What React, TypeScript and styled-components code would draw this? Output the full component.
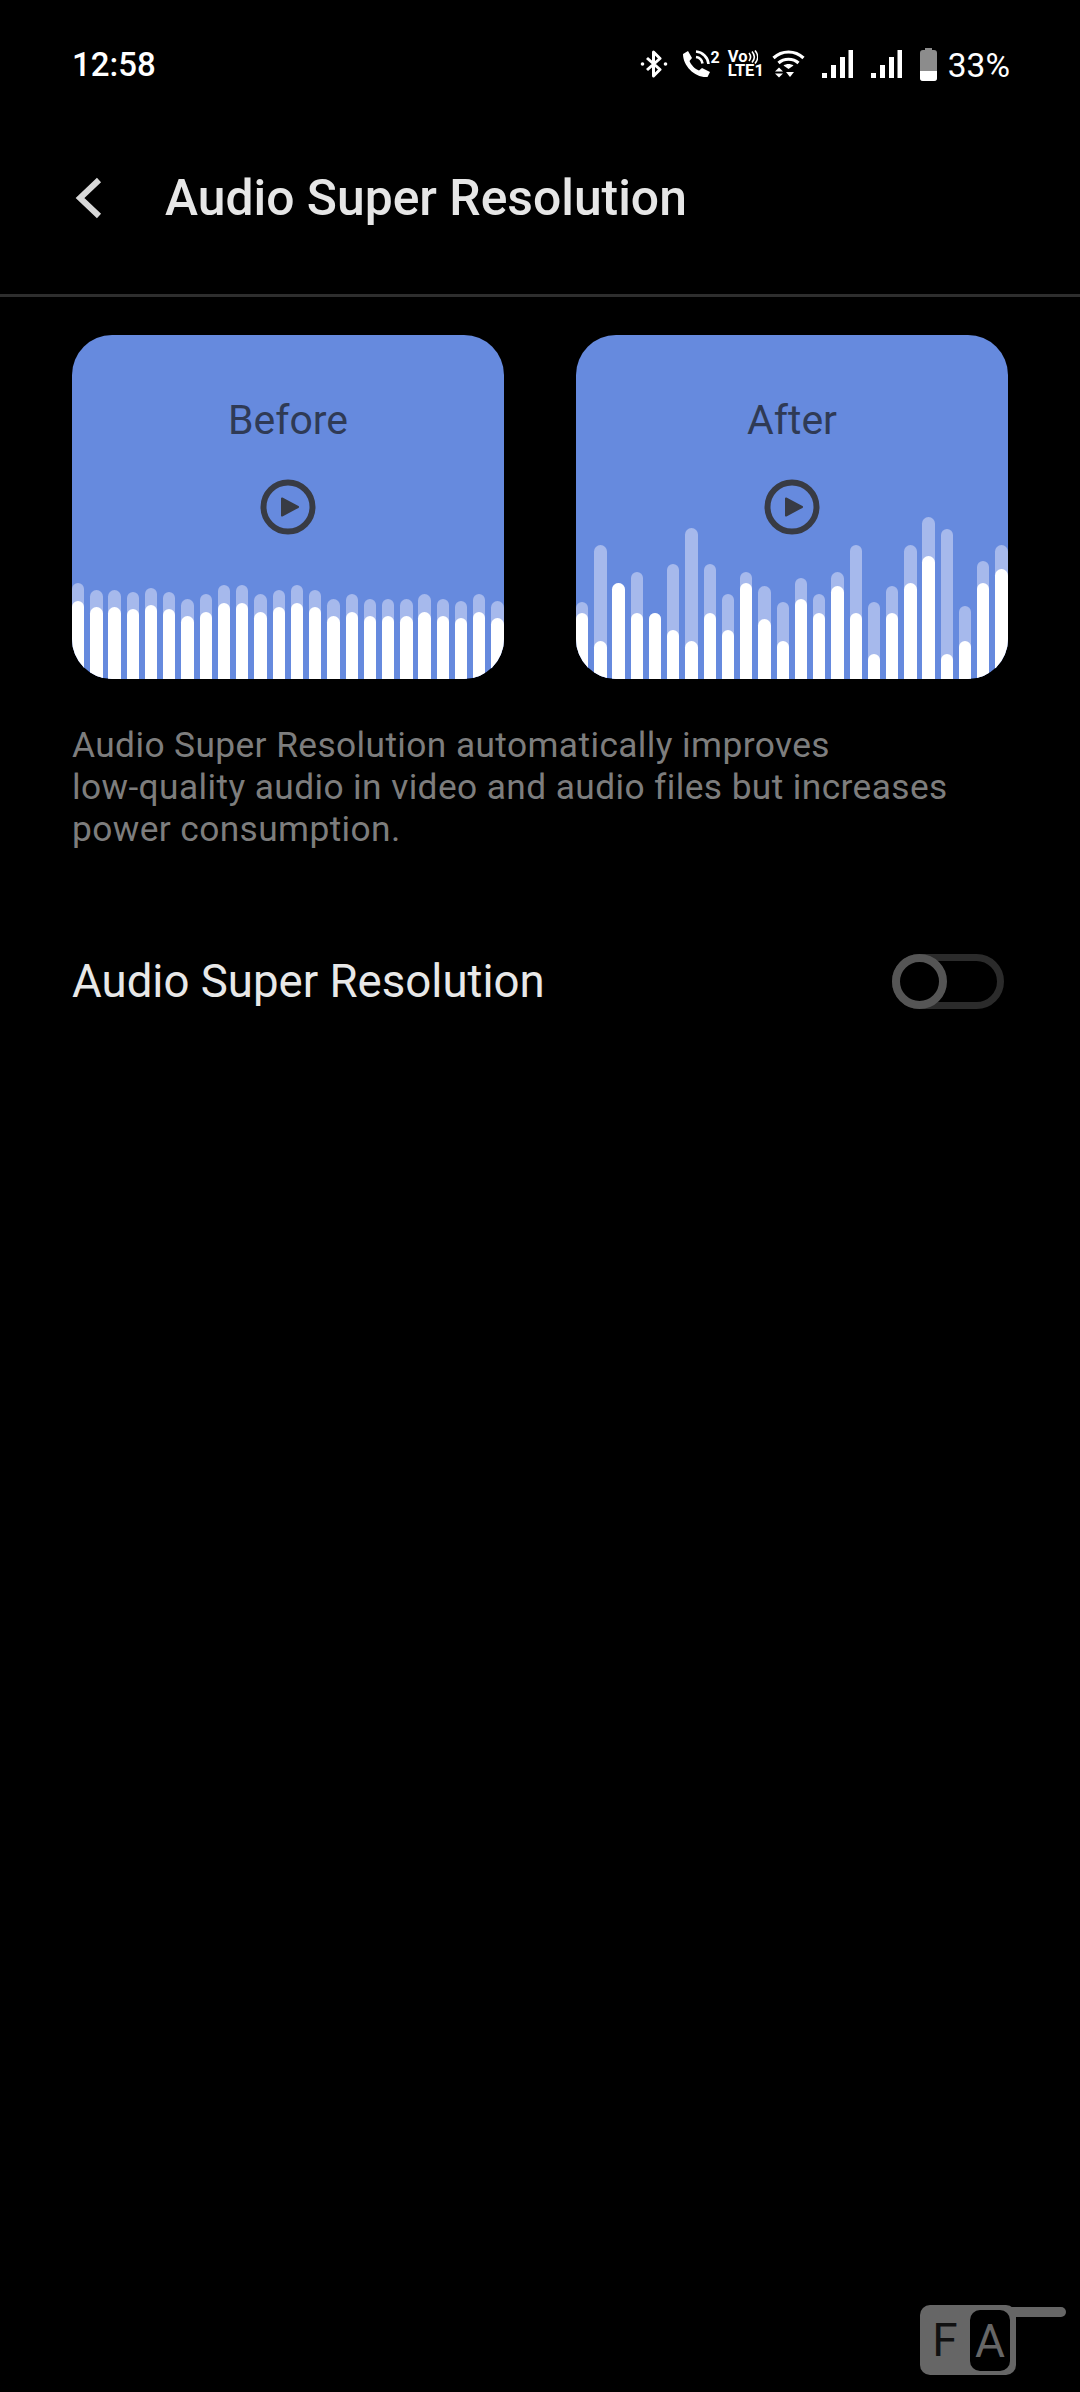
import { FC } from "react";
import styled, { createGlobalStyle } from "styled-components";

const GlobalStyle = createGlobalStyle`
  html, body {
    margin: 0;
    padding: 0;
    background: #000;
  }
  body {
    font-family: Roboto, "Liberation Sans", sans-serif;
  }
`;

const Page = styled.div`
  position: relative;
  width: 1080px;
  height: 2392px;
  overflow: hidden;
  background: #000;
`;

const StatusBar = styled.div`
  display: flex;
  align-items: center;
  justify-content: space-between;
  height: 128px;
  padding: 0 70px 0 72px;
  box-sizing: border-box;
  color: #fff;
`;

const Clock = styled.span`
  font-size: 33px;
  font-weight: 500;
`;

const StatusIcons = styled.div`
  display: flex;
  align-items: center;
`;

const StatusItem = styled.span<{ $gap: number }>`
  display: flex;
  margin-left: ${(p) => p.$gap}px;
`;

const Percent = styled.span`
  font-size: 33.5px;
  margin: 2px 0 0 11px;
`;

const VolteBadge = styled.span`
  display: flex;
  flex-direction: column;
  align-items: flex-start;
  margin-left: 8px;
  width: 34px;
  font-size: 16.5px;
  line-height: 14px;
  font-weight: 700;
`;

const VoLine = styled.span`
  display: flex;
  align-items: center;
`;

const CallBadge = styled.span`
  display: flex;
  align-items: flex-start;
  margin-left: 14px;
  font-size: 16px;
  line-height: 15px;
  font-weight: 700;
  height: 28px;
`;

const Header = styled.header`
  display: flex;
  align-items: center;
  height: 168.5px;
  padding: 0 0 26px 72px;
  box-sizing: border-box;
  border-bottom: 3px solid #2e2e2e;
`;

const BackIcon = styled.svg`
  width: 36px;
  height: 48px;
  margin-right: 57px;
`;

const Title = styled.h1`
  margin: 0;
  font-size: 49.8px;
  font-weight: 500;
  color: #e6e6e6;
`;

const Body = styled.main`
  padding: 38.5px 72px 0;
`;

const Cards = styled.div`
  display: flex;
  justify-content: space-between;
`;

const Card = styled.div`
  display: grid;
  width: 432px;
  height: 344px;
  border-radius: 40px;
  overflow: hidden;
  background: #668ade;

  > * {
    grid-area: 1 / 1;
  }
`;

const Wave = styled.div`
  display: flex;
  align-items: flex-end;
  justify-content: space-between;
`;

const Bar = styled.div`
  display: flex;
  align-items: flex-end;
  width: 12.3px;
  border-radius: 7px 7px 0 0;
  background: #a6b9ec;
`;

const BarFill = styled.div`
  width: 100%;
  border-radius: 7px 7px 0 0;
  background: #fff;
`;

const CardContent = styled.div`
  display: flex;
  flex-direction: column;
  align-items: center;
  padding-top: 60px;
  z-index: 1;
`;

const CardLabel = styled.span`
  font-size: 41px;
  line-height: 50px;
  color: #2f3a55;
`;

const PlayIcon = styled.svg`
  width: 56px;
  height: 56px;
  margin-top: 34px;
`;

const Description = styled.p`
  margin: 45px 0 0;
  font-size: 35.3px;
  line-height: 42px;
  letter-spacing: 0.4px;
  color: #7d7d7d;
`;

const SettingRow = styled.div`
  display: flex;
  align-items: center;
  justify-content: space-between;
  margin-top: 104px;
  padding-right: 4px;
`;

const SettingLabel = styled.span`
  font-size: 45.6px;
  color: #e8e8e8;
`;

const Toggle = styled.div`
  display: flex;
  width: 112px;
  height: 55px;
  box-sizing: border-box;
  border: 7px solid #2b2b2b;
  border-radius: 28px;
`;

const ToggleKnob = styled.div`
  flex: none;
  width: 55px;
  height: 55px;
  margin: -7px 0 0 -7px;
  box-sizing: border-box;
  border: 8px solid #555;
  border-radius: 50%;
  background: #000;
`;

const Watermark = styled.div`
  position: absolute;
  left: 920px;
  top: 2305px;
  display: flex;
  width: 96px;
  height: 70px;
  box-sizing: border-box;
  border-radius: 10px;
  background: #666;
  font-size: 46px;

  &::after {
    content: "";
    position: absolute;
    left: 90px;
    top: 2px;
    width: 56px;
    height: 10px;
    border-radius: 0 5px 5px 0;
    background: #666;
  }
`;

const WatermarkLetter = styled.span<{ $active?: boolean }>`
  display: flex;
  align-items: center;
  justify-content: center;
  width: ${(p) => (p.$active ? "40px" : "50px")};
  height: ${(p) => (p.$active ? "61px" : "70px")};
  margin: ${(p) => (p.$active ? "5px 0 0" : "0")};
  border-radius: 10px;
  background: ${(p) => (p.$active ? "#000" : "transparent")};
  color: ${(p) => (p.$active ? "#666" : "#111")};
`;

// [outer bar height, white bar height], read off the reference
const beforeBars: [number, number][] = [
  [96, 78], [89, 72], [89, 72], [87, 70], [91, 74], [87, 70],
  [80, 63], [85, 67], [94, 76], [94, 76], [85, 67], [89, 72],
  [94, 76], [89, 72], [80, 63], [85, 67], [80, 63], [80, 63],
  [80, 63], [85, 67], [80, 63], [78, 61], [85, 67], [78, 61],
];

const afterBars: [number, number][] = [
  [77, 66], [134, 38], [96, 96], [107, 66], [66, 66], [115, 49],
  [151, 38], [115, 66], [85, 49], [107, 96], [93, 60], [77, 38],
  [101, 80], [85, 66], [107, 93], [134, 66], [77, 25], [93, 66],
  [134, 96], [162, 123], [150, 25], [73, 38], [118, 96], [134, 110],
];

const WaveBars: FC<{ bars: [number, number][] }> = ({ bars }) => (
  <Wave>
    {bars.map(([outer, inner], i) => (
      <Bar key={i} style={{ height: outer }}>
        <BarFill style={{ height: inner }} />
      </Bar>
    ))}
  </Wave>
);

const PreviewCard: FC<{ label: string; bars: [number, number][] }> = ({ label, bars }) => (
  <Card>
    <WaveBars bars={bars} />
    <CardContent>
      <CardLabel>{label}</CardLabel>
      <PlayIcon viewBox="0 0 56 56">
        <circle cx="28" cy="28" r="24.5" fill="none" stroke="#383b44" strokeWidth="6" />
        <path d="M22 19.5 L38 28 L22 36.5 Z" fill="#383b44" stroke="#383b44" strokeWidth="2" strokeLinejoin="round" />
      </PlayIcon>
    </CardContent>
  </Card>
);

const SignalIcon: FC = () => (
  <svg width="31" height="28" viewBox="0 0 31 28" fill="#fff">
    <rect x="0" y="23" width="5" height="5" />
    <rect x="9" y="15" width="5" height="13" />
    <rect x="18" y="7" width="5" height="21" />
    <rect x="26.5" y="0" width="4.5" height="28" />
  </svg>
);

export default function App() {
  return (
    <Page>
      <GlobalStyle />
      <StatusBar>
        <Clock>12:58</Clock>
        <StatusIcons>
          <svg width="28" height="28" viewBox="0 0 28 28" fill="none" stroke="#fff" strokeWidth="3" strokeLinejoin="round">
            <path d="M7 8 L20 19.5 L13.5 26 V2 L20 8.5 L7 20" />
            <circle cx="2.5" cy="14" r="1.8" fill="#fff" stroke="none" />
            <circle cx="25.5" cy="14" r="1.8" fill="#fff" stroke="none" />
          </svg>
          <CallBadge>
            <svg width="29" height="28" viewBox="0 0 29 28" fill="none">
              <path d="M1 4 L6 1 L10 8 L7.5 11 C9 15 13 19 17 20.5 L20 18 L28 22 L25.5 27 C13 28 1 16 1 4 Z" fill="#fff" />
              <path d="M14 7 C17.5 7.5 20 10 20.5 13.5 M14 1.5 C20.5 2 26 7.5 26.5 14" stroke="#fff" strokeWidth="2.6" />
            </svg>
            2
          </CallBadge>
          <VolteBadge>
            <VoLine>
              Vo
              <svg width="10" height="14" viewBox="0 0 10 14" fill="none" stroke="#fff" strokeWidth="1.6">
                <path d="M1 3 C3 5.5 3 8.5 1 11 M4 1.5 C7 5 7 9 4 12.5 M7 0.5 C10.5 4.5 10.5 9.5 7 13.5" />
              </svg>
            </VoLine>
            <span>LTE1</span>
          </VolteBadge>
          <StatusItem $gap={10}>
            <svg width="33" height="29" viewBox="0 0 33 29" fill="none" stroke="#fff" strokeWidth="3.2">
              <path d="M1.5 8 C10 0 23 0 31.5 8" />
              <path d="M6.5 13 C12 8 21 8 26.5 13" />
              <path d="M16.5 19 L21.5 15.5 C18.5 13.5 14.5 13.5 11.5 15.5 Z" fill="#fff" stroke="none" />
              <path d="M3 21.5 L7 17.5 L11 21.5 Z M3 23.5 L11 23.5 L7 27.5 Z" fill="#fff" stroke="none" />
              <path d="M14 22 H22 L18 27 Z" fill="#fff" stroke="none" />
            </svg>
          </StatusItem>
          <StatusItem $gap={17}>
            <SignalIcon />
          </StatusItem>
          <StatusItem $gap={18}>
            <SignalIcon />
          </StatusItem>
          <StatusItem $gap={18}>
            <svg width="17" height="33" viewBox="0 0 17 33">
              <path d="M5 0 H12 V2 H14 Q17 2 17 5 V30 Q17 33 14 33 H3 Q0 33 0 30 V5 Q0 2 3 2 H5 Z" fill="#8c8c8c" />
              <path d="M0 23 H17 V30 Q17 33 14 33 H3 Q0 33 0 30 Z" fill="#fff" />
            </svg>
          </StatusItem>
          <Percent>33%</Percent>
        </StatusIcons>
      </StatusBar>
      <Header>
        <BackIcon viewBox="0 0 36 48" fill="none" stroke="#d8d8d8" strokeWidth="6">
          <path d="M27 6 L8 24 L27 42" />
        </BackIcon>
        <Title>Audio Super Resolution</Title>
      </Header>
      <Body>
        <Cards>
          <PreviewCard label="Before" bars={beforeBars} />
          <PreviewCard label="After" bars={afterBars} />
        </Cards>
        <Description>
          Audio Super Resolution automatically improves
          <br />
          low-quality audio in video and audio files but increases
          <br />
          power consumption.
        </Description>
        <SettingRow>
          <SettingLabel>Audio Super Resolution</SettingLabel>
          <Toggle>
            <ToggleKnob />
          </Toggle>
        </SettingRow>
      </Body>
      <Watermark>
        <WatermarkLetter>F</WatermarkLetter>
        <WatermarkLetter $active>A</WatermarkLetter>
      </Watermark>
    </Page>
  );
}
